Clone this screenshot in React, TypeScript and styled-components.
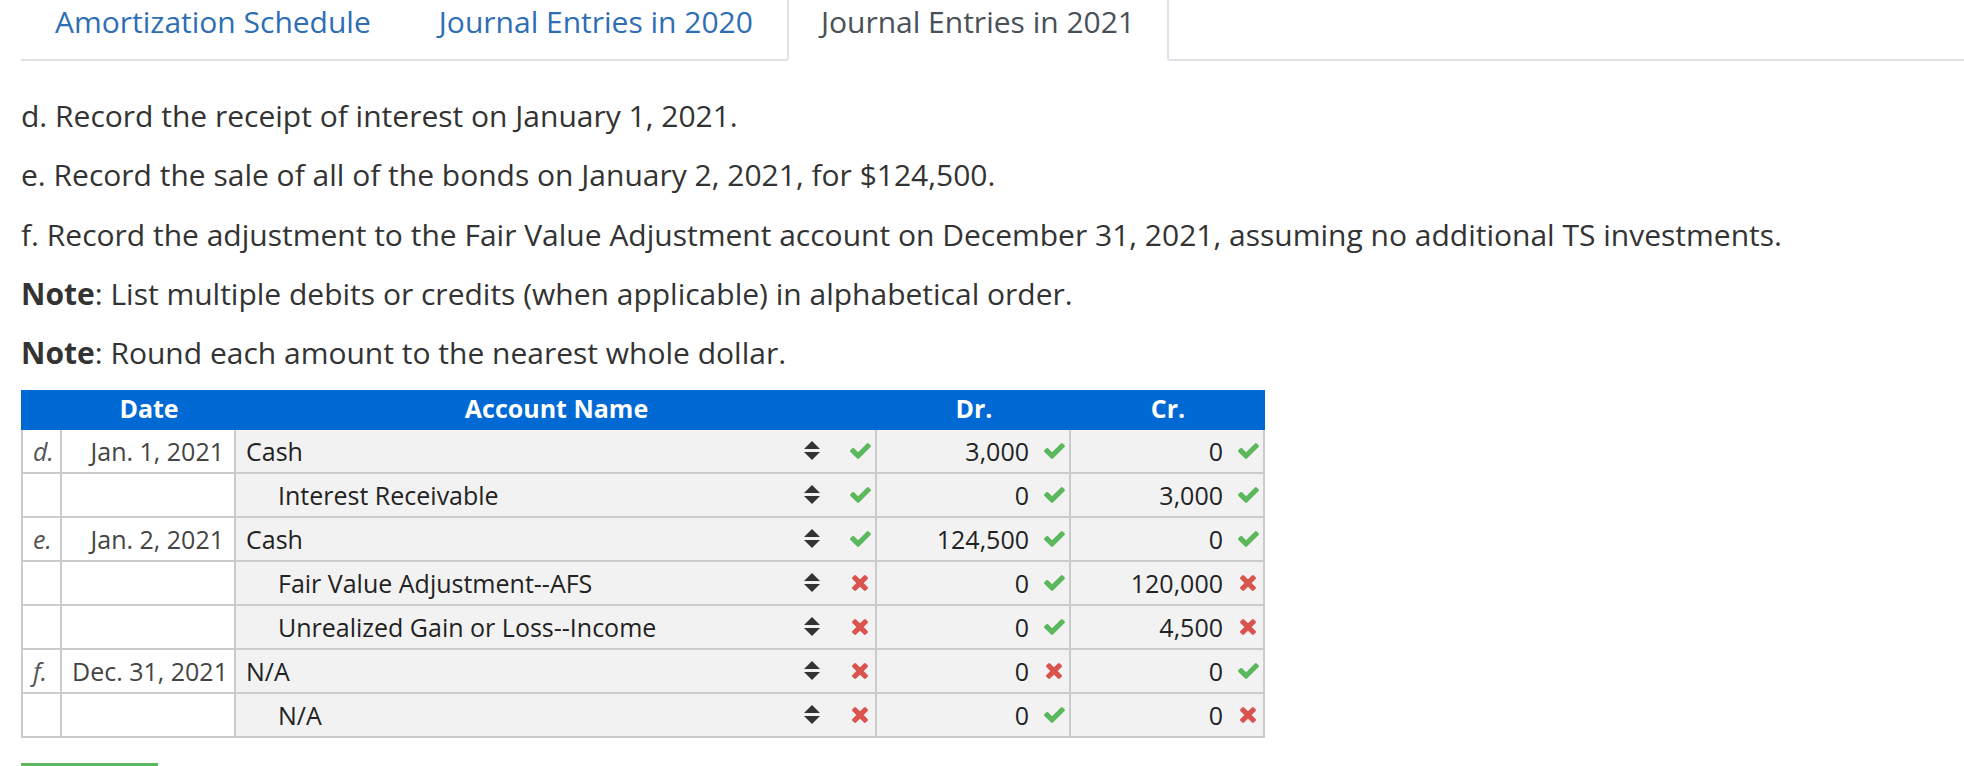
import React from 'react';
import styled, { createGlobalStyle } from 'styled-components';

const GlobalStyle = createGlobalStyle`
  html, body {
    margin: 0;
    padding: 0;
    background: #fff;
    overflow: hidden;
  }
  body {
    font-family: "Open Sans", "Liberation Sans", sans-serif;
    color: #333;
  }
`

const Page = styled.div`
  padding-left: 21px;
`

const TabBar = styled.div`
  display: flex;
  height: 59px;
  border-bottom: 2px solid #dee2e6;
`

const Tab = styled.div<{ $active?: boolean }>`
  box-sizing: border-box;
  height: 61px;
  padding: 3px 32px 0;
  font-size: 30px;
  line-height: 37px;
  white-space: nowrap;
  border: 2px solid transparent;
  border-top: 0;
  color: ${p => (p.$active ? '#495057' : '#2d6eb4')};
  ${p => p.$active && `
    background: #fff;
    border-color: #dee2e6;
    border-bottom-color: #fff;
  `}
`

const Content = styled.div`
  margin-top: 35px;
`

const Prompts = styled.div`
  display: flex;
  flex-direction: column;
  gap: 19.3px;
`

const Prompt = styled.p`
  margin: 0;
  font-size: 30px;
  line-height: 40px;
  color: #333;
  white-space: nowrap;
`

const Journal = styled.table`
  margin-top: 16.5px;
  width: 1244px;
  table-layout: fixed;
  border-collapse: separate;
  border-spacing: 0;
  font-size: 25px;
`

const HeadCell = styled.th`
  height: 37px;
  padding: 0 0 3px;
  background: #0069d4;
  color: #fff;
  font-weight: 700;
  font-size: 25px;
  line-height: 34px;
  text-align: center;
  vertical-align: middle;
`

const Cell = styled.td<{ $shade?: boolean; $first?: boolean; $align?: string }>`
  height: 42px;
  padding: 0 10px;
  background: ${p => (p.$shade ? '#f2f2f2' : '#fff')};
  border-bottom: 2px solid #cbcbcb;
  border-right: 2px solid #cbcbcb;
  ${p => p.$first && 'border-left: 2px solid #cbcbcb;'}
  text-align: ${p => p.$align || 'left'};
  vertical-align: middle;
  white-space: nowrap;
  line-height: 34px;
  color: #222;
`

const Letter = styled.span`
  font-style: italic;
  color: #555;
`

const DateText = styled.span`
  color: #444;
`

const AccountBox = styled.div<{ $indent?: boolean }>`
  display: flex;
  align-items: center;
  padding-left: ${p => (p.$indent ? '32px' : '0')};
  margin-right: -6px;
`

const AccountName = styled.span`
  flex: 1;
`

const SortIcon = styled.svg`
  width: 16px;
  height: 19px;
  margin-right: 29px;
`

const AmountBox = styled.div`
  display: flex;
  align-items: center;
  justify-content: flex-end;
  gap: 14px;
  margin-right: -6px;
`

const Slot = styled.span`
  display: inline-flex;
  width: 22px;
  justify-content: center;
  align-items: center;
`

const GreenButton = styled.button`
  display: block;
  margin-top: 25px;
  width: 137px;
  height: 44px;
  border: 0;
  border-radius: 0;
  background: #5cb85c;
`

const Check = () => (
  <svg width="21" height="16" viewBox="121 334 1550 1188">
    <path
      fill="#5cb85c"
      d="M1671 566q0 40-28 68l-724 724-136 136q-28 28-68 28t-68-28l-136-136-362-362q-28-28-28-68t28-68l136-136q28-28 68-28t68 28l294 295 656-657q28-28 68-28t68 28l136 136q28 28 28 68z"
    />
  </svg>
)

const Cross = () => (
  <svg width="16" height="16" viewBox="110 366 1188 1188">
    <path
      fill="#d9534f"
      d="M1298 1322q0 40-28 68l-136 136q-28 28-68 28t-68-28l-294-294-294 294q-28 28-68 28t-68-28l-136-136q-28-28-28-68t28-68l294-294-294-294q-28-28-28-68t28-68l136-136q28-28 68-28t68 28l294 294 294-294q28-28 68-28t68 28l136 136q28 28 28 68t-28 68l-294 294 294 294q28 28 28 68z"
    />
  </svg>
)

const Mark = ({ ok }: { ok: boolean }) => <Slot>{ok ? <Check /> : <Cross />}</Slot>

interface IEntry {
  letter: string
  date: string
  account: string
  indent: boolean
  accountOk: boolean
  dr: string
  drOk: boolean
  cr: string
  crOk: boolean
}

const entries: IEntry[] = [
  { letter: 'd.', date: 'Jan. 1, 2021', account: 'Cash', indent: false, accountOk: true, dr: '3,000', drOk: true, cr: '0', crOk: true },
  { letter: '', date: '', account: 'Interest Receivable', indent: true, accountOk: true, dr: '0', drOk: true, cr: '3,000', crOk: true },
  { letter: 'e.', date: 'Jan. 2, 2021', account: 'Cash', indent: false, accountOk: true, dr: '124,500', drOk: true, cr: '0', crOk: true },
  { letter: '', date: '', account: 'Fair Value Adjustment--AFS', indent: true, accountOk: false, dr: '0', drOk: true, cr: '120,000', crOk: false },
  { letter: '', date: '', account: 'Unrealized Gain or Loss--Income', indent: true, accountOk: false, dr: '0', drOk: true, cr: '4,500', crOk: false },
  { letter: 'f.', date: 'Dec. 31, 2021', account: 'N/A', indent: false, accountOk: false, dr: '0', drOk: false, cr: '0', crOk: true },
  { letter: '', date: '', account: 'N/A', indent: true, accountOk: false, dr: '0', drOk: true, cr: '0', crOk: false },
]

const App = () => {
  return (
    <Page>
      <GlobalStyle />
      <TabBar>
        <Tab>Amortization Schedule</Tab>
        <Tab>Journal Entries in 2020</Tab>
        <Tab $active>Journal Entries in 2021</Tab>
      </TabBar>
      <Content>
        <Prompts>
          <Prompt>d. Record the receipt of interest on January 1, 2021.</Prompt>
          <Prompt>e. Record the sale of all of the bonds on January 2, 2021, for $124,500.</Prompt>
          <Prompt>f. Record the adjustment to the Fair Value Adjustment account on December 31, 2021, assuming no additional TS investments.</Prompt>
          <Prompt><b>Note</b>: List multiple debits or credits (when applicable) in alphabetical order.</Prompt>
          <Prompt><b>Note</b>: Round each amount to the nearest whole dollar.</Prompt>
        </Prompts>
        <Journal>
          <colgroup>
            <col style={{ width: 41 }} />
            <col style={{ width: 174 }} />
            <col style={{ width: 641 }} />
            <col style={{ width: 194 }} />
            <col style={{ width: 194 }} />
          </colgroup>
          <thead>
            <tr>
              <HeadCell />
              <HeadCell>Date</HeadCell>
              <HeadCell>Account Name</HeadCell>
              <HeadCell>Dr.</HeadCell>
              <HeadCell>Cr.</HeadCell>
            </tr>
          </thead>
          <tbody>
            {entries.map((entry, i) => (
              <tr key={i}>
                <Cell $first><Letter>{entry.letter}</Letter></Cell>
                <Cell $align="right"><DateText>{entry.date}</DateText></Cell>
                <Cell $shade>
                  <AccountBox $indent={entry.indent}>
                    <AccountName>{entry.account}</AccountName>
                    <SortIcon viewBox="0 0 16 19">
                      <polygon points="8,0 16,8 0,8" fill="#333" />
                      <polygon points="0,11 16,11 8,19" fill="#333" />
                    </SortIcon>
                    <Mark ok={entry.accountOk} />
                  </AccountBox>
                </Cell>
                <Cell $shade>
                  <AmountBox>
                    <span>{entry.dr}</span>
                    <Mark ok={entry.drOk} />
                  </AmountBox>
                </Cell>
                <Cell $shade>
                  <AmountBox>
                    <span>{entry.cr}</span>
                    <Mark ok={entry.crOk} />
                  </AmountBox>
                </Cell>
              </tr>
            ))}
          </tbody>
        </Journal>
        <GreenButton />
      </Content>
    </Page>
  )
}

export default App
